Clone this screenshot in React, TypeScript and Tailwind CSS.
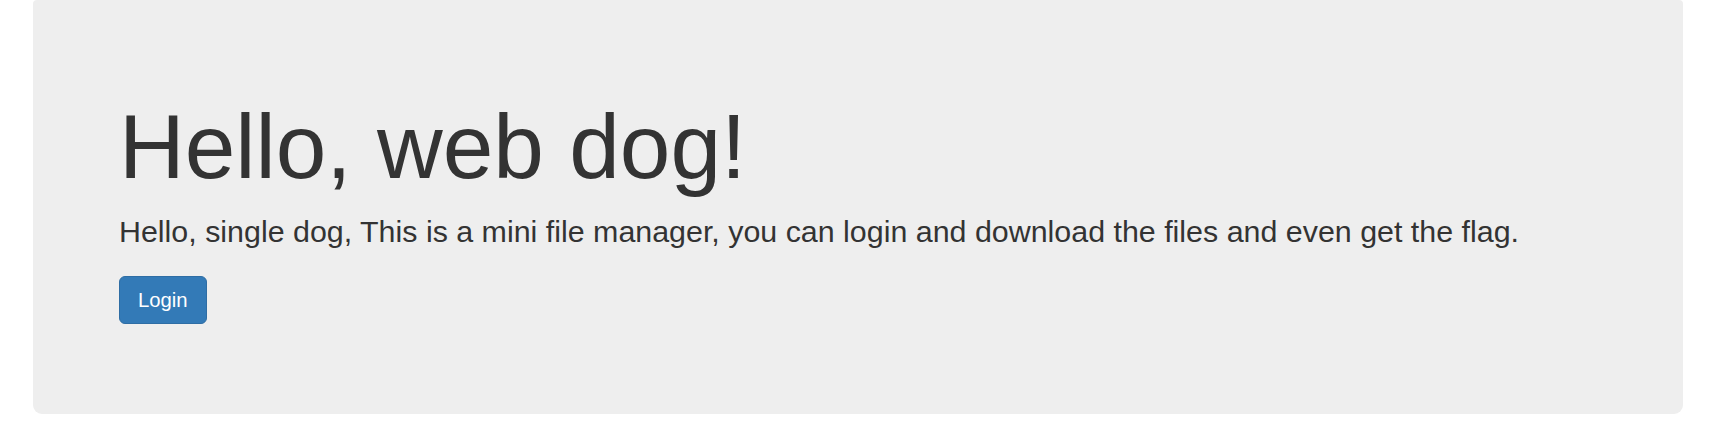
import React from "react";

export default function App() {
  return (
    <div className="min-h-[433px] bg-white pl-[33px] pr-[35px]" style={{ fontFamily: '"Liberation Sans", Arial, sans-serif' }}>
      {/* Jumbotron */}
      <div className="bg-[#eeeeee] text-[#333333] rounded-t-[4px] rounded-b-[9px] pt-[97px] pb-[90px] pl-[86px] pr-[86px]">
        <h1 className="text-[91px] leading-[99px] font-normal m-0">Hello, web dog!</h1>
        <p className="text-[30.4px] leading-[43px] mt-[14px] mb-[23px]">
          Hello, single dog, This is a mini file manager, you can login and download the files and even get the flag.
        </p>
        <div className="flex">
          <a
            href="#"
            className="block h-[48px] px-[18px] leading-[46px] text-[20.3px] text-white bg-[#337ab7] border border-[#2e6da4] rounded-[6px]"
          >
            Login
          </a>
        </div>
      </div>
    </div>
  );
}
